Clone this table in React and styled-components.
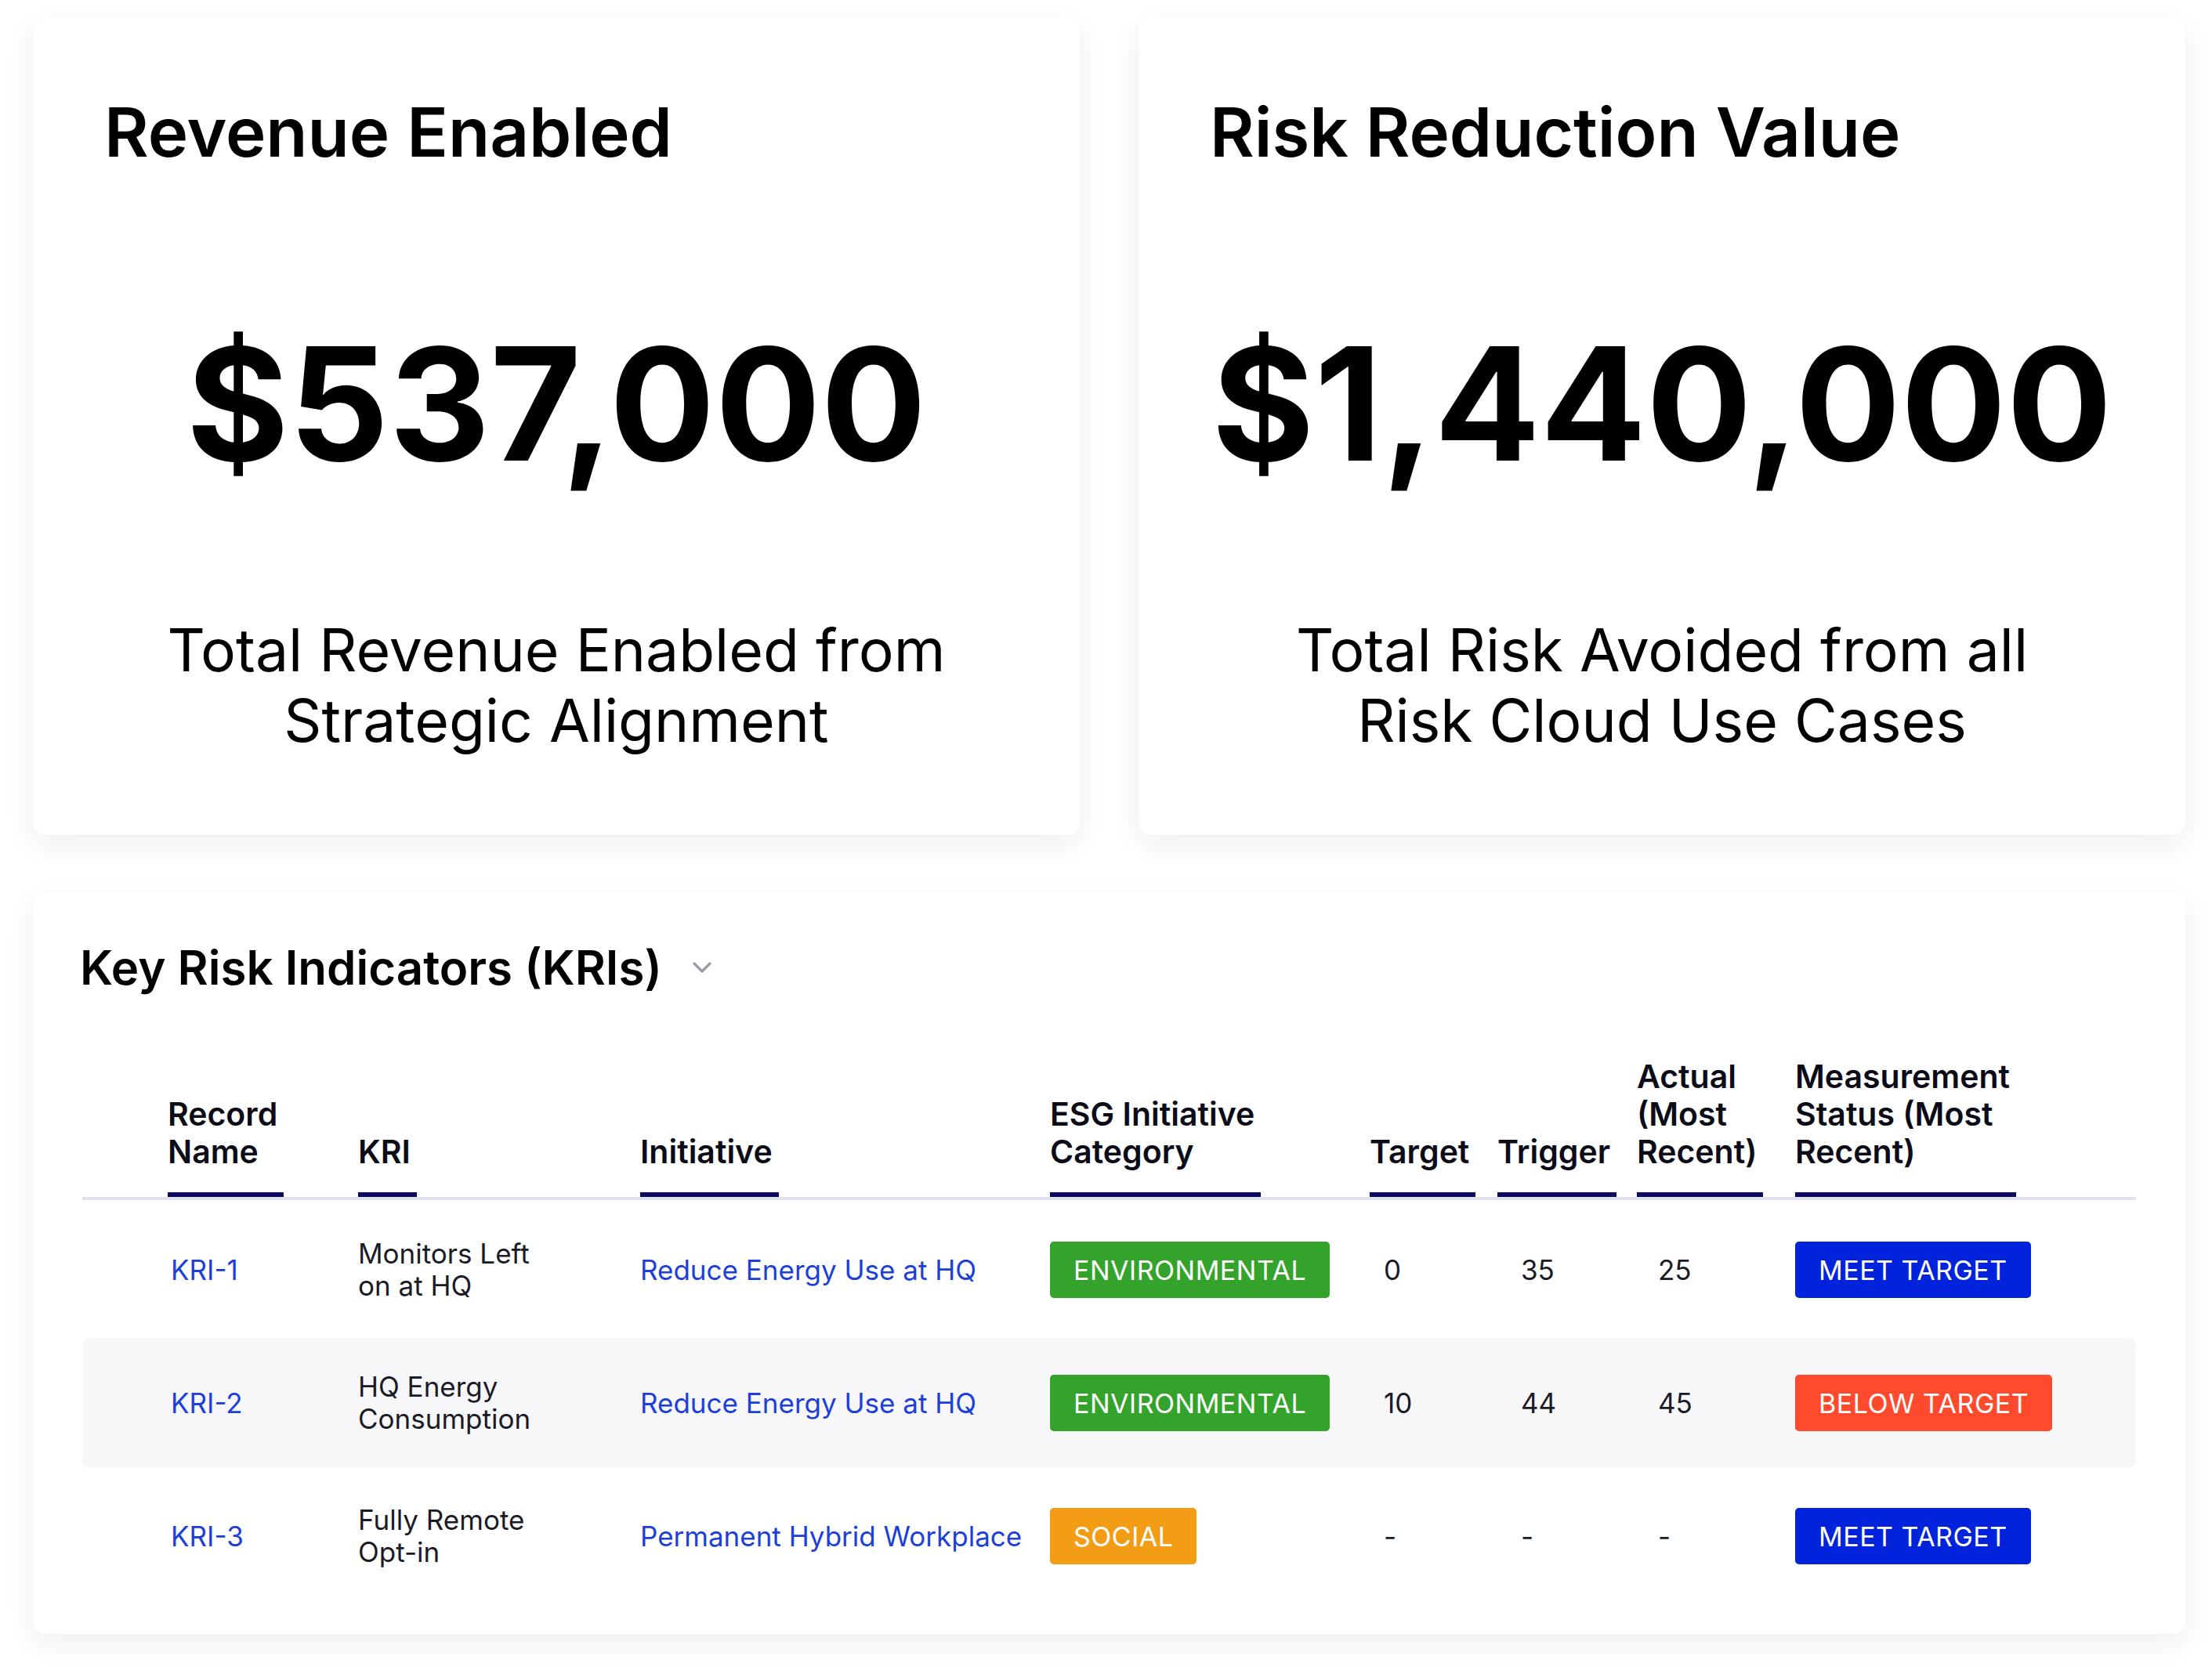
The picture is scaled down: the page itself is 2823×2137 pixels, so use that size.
import React from 'react';
import styled, { createGlobalStyle } from 'styled-components';
import { ChevronDown } from 'lucide-react';

const GlobalStyle = createGlobalStyle`
  * { box-sizing: border-box; }
  html, body {
    margin: 0;
    padding: 0;
    background: #ffffff;
  }
  body {
    font-family: Inter, "Noto Sans", "Liberation Sans", sans-serif;
    color: #000000;
    -webkit-font-smoothing: antialiased;
  }
`;

const Page = styled.main`
  width: 2789px;
  padding: 23px 0 40px 42px;
  display: flex;
  flex-direction: column;
  gap: 72px;
`;

const TopRow = styled.div`
  display: grid;
  grid-template-columns: 1fr 1fr;
  gap: 75px;
`;

const Card = styled.section`
  background: #ffffff;
  border-radius: 16px;
  box-shadow: 0 12px 36px rgba(31, 31, 92, 0.07), 0 0 2px rgba(31, 31, 92, 0.04);
`;

const MetricCard = styled(Card)`
  display: flex;
  flex-direction: column;
  padding: 102px 91px 101px;
`;

const MetricTitle = styled.h2`
  margin: 0;
  font-size: 87px;
  line-height: 1;
  font-weight: 600;
`;

const MetricValue = styled.div`
  margin: 203px -80px 0;
  font-size: 200px;
  line-height: 1;
  font-weight: 700;
  text-align: center;
  white-space: nowrap;
`;

const MetricCaption = styled.p`
  max-width: 1060px;
  margin: 170px auto 0;
  font-size: 75px;
  line-height: 90px;
  font-weight: 400;
  text-align: center;
`;

const TableCard = styled(Card)`
  padding: 67px 63px 42px;
`;

const SectionHeader = styled.div`
  display: flex;
  align-items: center;
  gap: 31px;
  margin-left: -3px;
  color: #9c9ca8;
`;

const SectionTitle = styled.h3`
  margin: 0;
  font-size: 60px;
  line-height: 1;
  font-weight: 600;
  color: #000000;
`;

const columns = '352px 360px 523px 408px 163px 178px 202px 435px';

const Table = styled.div`
  margin-top: 85px;
`;

const HeadRow = styled.div`
  display: grid;
  grid-template-columns: ${columns};
  align-items: end;
  border-bottom: 4px solid #dfe1ee;
`;

const HeadCell = styled.div`
  display: flex;
  align-items: flex-end;
  padding-left: ${({ $pad }) => $pad || 0}px;
`;

const HeadLabel = styled.span`
  display: block;
  padding: 0 8px 28px 0;
  border-bottom: 6px solid #0d0c5c;
  font-size: 41px;
  line-height: 48px;
  font-weight: 600;
  color: #0c0c18;
`;

const Body = styled.div`
  display: flex;
  flex-direction: column;
  gap: 4px;
  margin-top: 6px;
`;

const Row = styled.div`
  display: grid;
  grid-template-columns: ${columns};
  align-items: center;
  height: 166px;
  border-radius: 10px;
  background: ${({ $shaded }) => ($shaded ? '#f7f7fa' : 'transparent')};
`;

const Cell = styled.div`
  padding-left: ${({ $pad }) => $pad || 0}px;
  font-size: 35px;
  line-height: 41px;
  color: #1b1b26;
`;

const KriText = styled.div`
  max-width: 245px;
`;

const RecordLink = styled.a`
  color: #1c3fd9;
  text-decoration: none;
  white-space: nowrap;
`;

const Badge = styled.span`
  display: inline-flex;
  align-items: center;
  height: 72px;
  padding: 0 30px;
  border-radius: 5px;
  background: ${({ $color }) => $color};
  color: #ffffff;
  font-size: 34px;
  letter-spacing: 0.5px;
  text-transform: uppercase;
  white-space: nowrap;
`;

const categoryColors = {
  Environmental: '#33a32c',
  Social: '#f39d17',
};

const statusColors = {
  'Meet Target': '#0023db',
  'Below Target': '#ff4a2d',
};

const headers = [
  { label: ['Record', 'Name'], pad: 109 },
  { label: ['KRI'] },
  { label: ['Initiative'] },
  { label: ['ESG Initiative', 'Category'] },
  { label: ['Target'] },
  { label: ['Trigger'] },
  { label: ['Actual', '(Most', 'Recent)'] },
  { label: ['Measurement', 'Status (Most', 'Recent)'] },
];

const rows = [
  {
    id: 'KRI-1',
    kri: 'Monitors Left on at HQ',
    initiative: 'Reduce Energy Use at HQ',
    category: 'Environmental',
    target: '0',
    trigger: '35',
    actual: '25',
    status: 'Meet Target',
  },
  {
    id: 'KRI-2',
    kri: 'HQ Energy Consumption',
    initiative: 'Reduce Energy Use at HQ',
    category: 'Environmental',
    target: '10',
    trigger: '44',
    actual: '45',
    status: 'Below Target',
  },
  {
    id: 'KRI-3',
    kri: 'Fully Remote Opt-in',
    initiative: 'Permanent Hybrid Workplace',
    category: 'Social',
    target: '-',
    trigger: '-',
    actual: '-',
    status: 'Meet Target',
  },
];

const metrics = [
  {
    title: 'Revenue Enabled',
    value: '$537,000',
    caption: 'Total Revenue Enabled from Strategic Alignment',
  },
  {
    title: 'Risk Reduction Value',
    value: '$1,440,000',
    caption: 'Total Risk Avoided from all Risk Cloud Use Cases',
  },
];

const App = () => (
  <>
    <GlobalStyle />
    <Page>
      <TopRow>
        {metrics.map((m) => (
          <MetricCard key={m.title}>
            <MetricTitle>{m.title}</MetricTitle>
            <MetricValue>{m.value}</MetricValue>
            <MetricCaption>{m.caption}</MetricCaption>
          </MetricCard>
        ))}
      </TopRow>

      <TableCard>
        <SectionHeader>
          <SectionTitle>Key Risk Indicators (KRIs)</SectionTitle>
          <ChevronDown size={40} strokeWidth={2} />
        </SectionHeader>

        <Table>
          <HeadRow>
            {headers.map((h) => (
              <HeadCell key={h.label.join(' ')} $pad={h.pad}>
                <HeadLabel>
                  {h.label.map((line, i) => (
                    <React.Fragment key={line}>
                      {i > 0 && <br />}
                      {line}
                    </React.Fragment>
                  ))}
                </HeadLabel>
              </HeadCell>
            ))}
          </HeadRow>

          <Body>
            {rows.map((r, i) => (
              <Row key={r.id} $shaded={i === 1}>
                <Cell $pad={113}>
                  <RecordLink href="#">{r.id}</RecordLink>
                </Cell>
                <Cell>
                  <KriText>{r.kri}</KriText>
                </Cell>
                <Cell>
                  <RecordLink href="#">{r.initiative}</RecordLink>
                </Cell>
                <Cell>
                  <Badge $color={categoryColors[r.category]}>{r.category}</Badge>
                </Cell>
                <Cell $pad={18}>{r.target}</Cell>
                <Cell $pad={30}>{r.trigger}</Cell>
                <Cell $pad={27}>{r.actual}</Cell>
                <Cell>
                  <Badge $color={statusColors[r.status]}>{r.status}</Badge>
                </Cell>
              </Row>
            ))}
          </Body>
        </Table>
      </TableCard>
    </Page>
  </>
);

export default App;
